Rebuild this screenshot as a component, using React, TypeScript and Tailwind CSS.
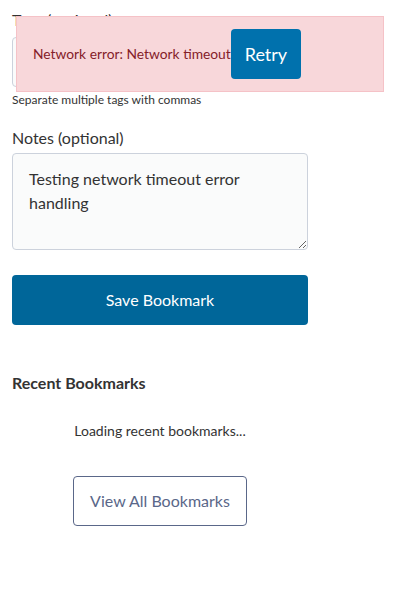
import { useState } from 'react';

const font = { fontFamily: '"Lato", "Liberation Sans", sans-serif' };

export default function App() {
  const [tags, setTags] = useState('');
  const [notes, setNotes] = useState('Testing network timeout error handling');

  return (
    <div className="relative min-h-[600px] bg-white text-[#333]" style={font}>
      <div className="w-[320px] px-3 pt-[8px]">
        <label className="block text-base leading-6">Tags (optional)</label>
        <input
          value={tags}
          onChange={(e) => setTags(e.target.value)}
          className="mt-[5px] block h-[50px] w-full rounded border border-[#ccd2dc] bg-[#fafbfb] px-4 text-base"
        />
        <p className="mt-[5px] text-xs leading-4">Separate multiple tags with commas</p>

        <label className="mt-[18px] block text-base leading-6">Notes (optional)</label>
        <textarea
          value={notes}
          onChange={(e) => setNotes(e.target.value)}
          className="mt-[3px] block h-[97px] w-full rounded border border-[#ccd2dc] bg-[#fafbfb] px-4 py-[13px] text-base leading-6"
        />

        <button
          type="button"
          className="mt-[25px] h-[50px] w-full rounded bg-[#006699] text-base text-white"
        >
          Save Bookmark
        </button>

        <h2 className="mt-[46px] text-base font-bold leading-6">Recent Bookmarks</h2>

        <div className="mt-[26px] flex flex-col items-center">
          <p className="text-sm leading-5">Loading recent bookmarks...</p>
          <button
            type="button"
            className="mt-[35px] h-[50px] rounded border border-[#5a6789] px-4 text-base text-[#5a6789]"
          >
            View All Bookmarks
          </button>
        </div>
      </div>

      <div className="absolute left-4 top-4 flex w-[368px] items-center border border-[#f5c2c7] bg-[#f8d7da] px-4 py-3">
        <span className="text-[13.8px] text-[#842029]">Network error: Network timeout</span>
        <button
          type="button"
          className="h-[50px] rounded bg-[#0071ad] px-[14px] text-lg text-white"
        >
          Retry
        </button>
      </div>
    </div>
  );
}
